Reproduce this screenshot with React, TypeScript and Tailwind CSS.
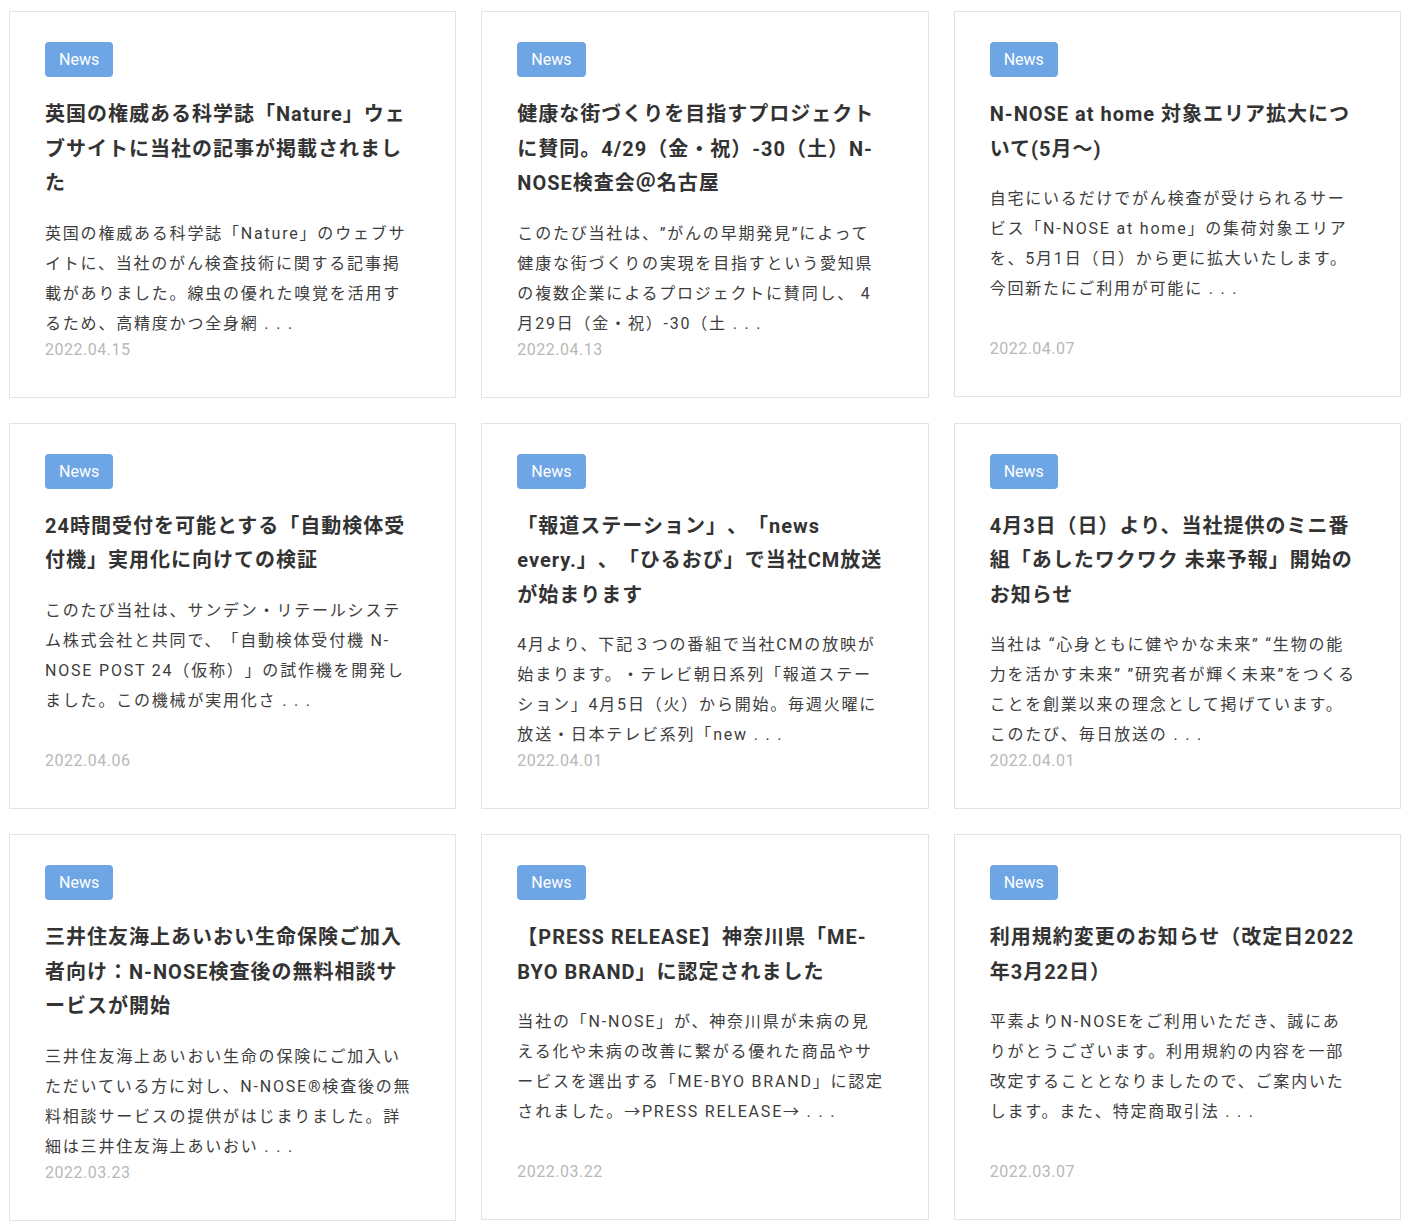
import React from "react";

type Post = {
  title: string[];
  excerpt: string[];
  date: string;
};

// lines are kept as they break on the original page
const posts: Post[] = [
  {
    title: ["英国の権威ある科学誌「Nature」ウェ", "ブサイトに当社の記事が掲載されまし", "た"],
    excerpt: [
      "英国の権威ある科学誌「Nature」のウェブサ",
      "イトに、当社のがん検査技術に関する記事掲",
      "載がありました。線虫の優れた嗅覚を活用す",
      "るため、高精度かつ全身網 . . .",
    ],
    date: "2022.04.15",
  },
  {
    title: ["健康な街づくりを目指すプロジェクト", "に賛同。4/29（金・祝）-30（土）N-", "NOSE検査会＠名古屋"],
    excerpt: [
      "このたび当社は、”がんの早期発見”によって",
      "健康な街づくりの実現を目指すという愛知県",
      "の複数企業によるプロジェクトに賛同し、 4",
      "月29日（金・祝）-30（土 . . .",
    ],
    date: "2022.04.13",
  },
  {
    title: ["N-NOSE at home 対象エリア拡大につ", "いて(5月～)"],
    excerpt: [
      "自宅にいるだけでがん検査が受けられるサー",
      "ビス「N-NOSE at home」の集荷対象エリア",
      "を、5月1日（日）から更に拡大いたします。",
      "今回新たにご利用が可能に . . .",
    ],
    date: "2022.04.07",
  },
  {
    title: ["24時間受付を可能とする「自動検体受", "付機」実用化に向けての検証"],
    excerpt: [
      "このたび当社は、サンデン・リテールシステ",
      "ム株式会社と共同で、「自動検体受付機 N-",
      "NOSE POST 24（仮称）」の試作機を開発し",
      "ました。この機械が実用化さ . . .",
    ],
    date: "2022.04.06",
  },
  {
    title: ["「報道ステーション」、「news", "every.」、「ひるおび」で当社CM放送", "が始まります"],
    excerpt: [
      "4月より、下記３つの番組で当社CMの放映が",
      "始まります。・テレビ朝日系列「報道ステー",
      "ション」4月5日（火）から開始。毎週火曜に",
      "放送・日本テレビ系列「new . . .",
    ],
    date: "2022.04.01",
  },
  {
    title: ["4月3日（日）より、当社提供のミニ番", "組「あしたワクワク 未来予報」開始の", "お知らせ"],
    excerpt: [
      "当社は “心身ともに健やかな未来” “生物の能",
      "力を活かす未来” ”研究者が輝く未来”をつくる",
      "ことを創業以来の理念として掲げています。",
      "このたび、毎日放送の . . .",
    ],
    date: "2022.04.01",
  },
  {
    title: ["三井住友海上あいおい生命保険ご加入", "者向け：N-NOSE検査後の無料相談サ", "ービスが開始"],
    excerpt: [
      "三井住友海上あいおい生命の保険にご加入い",
      "ただいている方に対し、N-NOSE®検査後の無",
      "料相談サービスの提供がはじまりました。詳",
      "細は三井住友海上あいおい . . .",
    ],
    date: "2022.03.23",
  },
  {
    title: ["【PRESS RELEASE】神奈川県「ME-", "BYO BRAND」に認定されました"],
    excerpt: [
      "当社の「N-NOSE」が、神奈川県が未病の見",
      "える化や未病の改善に繋がる優れた商品やサ",
      "ービスを選出する「ME-BYO BRAND」に認定",
      "されました。→PRESS RELEASE→ . . .",
    ],
    date: "2022.03.22",
  },
  {
    title: ["利用規約変更のお知らせ（改定日2022", "年3月22日）"],
    excerpt: [
      "平素よりN-NOSEをご利用いただき、誠にあ",
      "りがとうございます。利用規約の内容を一部",
      "改定することとなりましたので、ご案内いた",
      "します。また、特定商取引法 . . .",
    ],
    date: "2022.03.07",
  },
];

function NewsCard({ post }: { post: Post }) {
  return (
    <a
      href="#"
      className="block border border-[#e3e3e3] bg-white px-[35px] pt-[30px] pb-[35px]"
    >
      <span className="inline-block rounded-[4px] bg-[#6ea5e5] px-[14px] py-[5px] text-[16px] leading-[25px] text-white">
        News
      </span>
      <div className="mt-[20px] min-h-[241px]">
        <h3 className="text-[20px] font-bold leading-[34.5px] tracking-[1px] text-[#333]">
          {post.title.map((line, i) => (
            <span key={i} className="block whitespace-nowrap">
              {line}
            </span>
          ))}
        </h3>
        <p className="mt-[18px] text-[16px] leading-[30px] tracking-[1.8px] text-[#3d3d3d]">
          {post.excerpt.map((line, i) => (
            <span key={i} className="block whitespace-nowrap">
              {line}
            </span>
          ))}
        </p>
      </div>
      <div className="-mt-[1px] text-[16px] leading-[24px] tracking-[0.5px] text-[#b8b8b8]">
        {post.date}
      </div>
    </a>
  );
}

export default function App() {
  return (
    <div className="min-h-screen bg-white pl-[9px] pr-[12px] pt-[11px] pb-[10px] font-['Roboto','Noto_Sans_CJK_JP',sans-serif] [text-spacing-trim:space-all]">
      <div className="grid grid-cols-3 items-start gap-[25px]">
        {posts.map((post, i) => (
          <NewsCard key={i} post={post} />
        ))}
      </div>
    </div>
  );
}
